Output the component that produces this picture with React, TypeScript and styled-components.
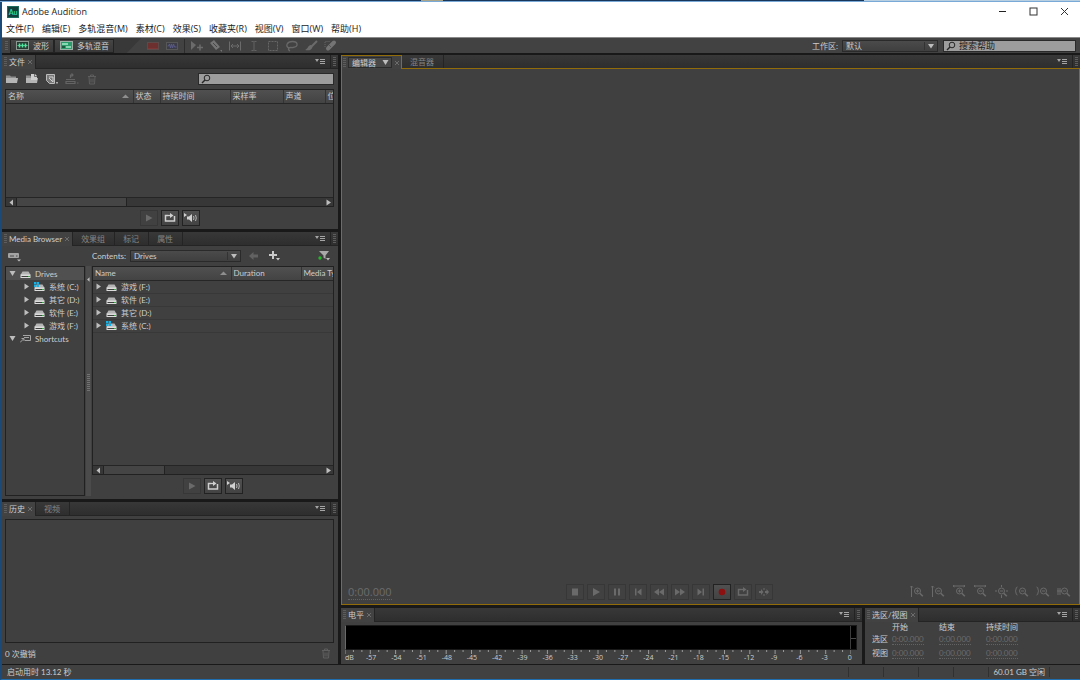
import React from "react";
import styled, { createGlobalStyle, css } from "styled-components";

const GlobalStyle = createGlobalStyle`
  *, *::before, *::after { box-sizing: border-box; }
  body {
    margin: 0;
    background: #191919;
    color: #cdcdcd;
    font: 400 8px/12px Lato, "Noto Sans CJK SC", sans-serif;
  }
  button, input, select {
    margin: 0;
    padding: 0;
    border: 0;
    background: none;
    color: inherit;
    font: inherit;
  }
  svg { display: block; flex: none; }
  table { border-collapse: collapse; border-spacing: 0; }
  th, td { padding: 0; text-align: left; font-weight: 400; }
`;

const amber = "#936c0a";

/* ---------- window ---------- */

const Window = styled.div`
  display: flex;
  flex-direction: column;
  min-height: 100vh;
  border-left: 2px solid #1c4a78;
  border-bottom: 1px solid #1f6fb0;
`;

const DesktopEdge = styled.div`
  height: 2px;
  margin-left: -2px;
  border-bottom: 1px solid #79a9d6;
  background: linear-gradient(90deg, #17365a 0 39%, #a8a58a 39% 41%, #17365a 41% 80%, #b8cfe2 80%);
`;

const TitleBar = styled.header`
  display: flex;
  align-items: center;
  gap: 3px;
  height: 19px;
  padding-left: 5px;
  background: #fff;
  color: #1b1b1b;
`;

const WindowTitle = styled.h1`
  flex: 1;
  margin: 0;
  font: 400 9px/12px "Open Sans", sans-serif;
`;

const CaptionButtons = styled.div`
  display: flex;
`;

const CaptionButton = styled.button`
  display: grid;
  place-items: center;
  width: 31px;
  height: 19px;
`;

const MenuBar = styled.nav`
  display: flex;
  align-items: center;
  gap: 8px;
  height: 16px;
  padding-left: 4px;
  background: #fff;
`;

const MenuItem = styled.button`
  color: #1b1b1b;
  font: 400 9px/12px "Open Sans", "Noto Sans CJK SC", sans-serif;
  white-space: nowrap;
`;

/* ---------- toolbar ---------- */

const ToolBar = styled.div`
  display: flex;
  align-items: center;
  height: 16px;
  padding: 0 4px 0 3px;
  border-top: 1px solid #8a8a8a;
  background: #424242;
`;

const Grip = styled.span`
  flex: none;
  width: 3px;
  height: 10px;
  background: repeating-linear-gradient(#5d5d5d 0 1px, transparent 1px 2px);
`;

const ModeButton = styled.button`
  display: flex;
  align-items: center;
  gap: 4px;
  height: 14px;
  padding: 0 4px 0 5px;
  border: 1px solid #232323;
  background: linear-gradient(#454545, #383838);
  white-space: nowrap;
`;

const ModeGroup = styled.div`
  display: flex;
  margin-left: 2px;
`;

const ToolSlant = styled.span`
  width: 32px;
  height: 15px;
  background: #383838;
  clip-path: polygon(0 0, 85% 0, 40% 100%, 0 100%);
`;

const ToolGroup = styled.div`
  display: flex;
  align-items: center;
  gap: 5px;
`;

const Divider = styled.span`
  width: 1px;
  height: 14px;
  margin: 0 5px;
  background: #2c2c2c;
`;

const IconButton = styled.button<{ $w?: number }>`
  display: grid;
  place-items: center;
  flex: none;
  width: ${(p) => p.$w ?? 14}px;
  height: 14px;
`;

const Spacer = styled.span`
  flex: 1;
`;

const LabelledField = styled.div<{ $indent?: number }>`
  display: flex;
  align-items: center;
  gap: 4px;
  margin-left: ${(p) => p.$indent ?? 0}px;
  white-space: nowrap;
`;

const SelectBox = styled.div<{ $w: number }>`
  position: relative;
  width: ${(p) => p.$w}px;
  height: 12px;
  border: 1px solid #2a2a2a;
  background: linear-gradient(#4b4b4b, #3f3f3f);

  select {
    display: block;
    width: 100%;
    height: 10px;
    padding-left: 3px;
    appearance: none;
    line-height: 10px;
  }
  svg {
    position: absolute;
    top: 0;
    right: 0;
    pointer-events: none;
  }
`;

const SearchBox = styled.label<{ $w: number }>`
  display: flex;
  align-items: center;
  gap: 3px;
  width: ${(p) => p.$w}px;
  height: 12px;
  padding-left: 2px;
  border: 1px solid #2a2a2a;
  background: #9d9d9d;

  input {
    flex: 1;
    min-width: 0;
    height: 10px;
    color: #202020;
    font-size: 9px;
    line-height: 10px;
    outline: none;
  }
  input::placeholder { color: #202020; opacity: 1; }
`;

const HelpSearch = styled.div`
  margin-left: 5px;
`;

/* ---------- panels ---------- */

const Workspace = styled.main`
  display: flex;
  flex: 1;
  gap: 3px;
  padding-top: 2px;
  background: #191919;
`;

const Sidebar = styled.div`
  display: grid;
  grid-template-rows: 174fr 267fr 162fr;
  gap: 3px;
  flex: none;
  width: 336px;
`;

const MainColumn = styled.div`
  display: flex;
  flex: 1;
  flex-direction: column;
  gap: 3px;
  min-width: 0;
`;

const BottomRow = styled.div`
  display: flex;
  gap: 3px;
  min-height: 56px;
`;

const Panel = styled.section<{ $grow?: boolean; $w?: number }>`
  display: flex;
  flex-direction: column;
  min-width: 0;
  min-height: 0;
  background: #404040;
  ${(p) => p.$grow && css`flex: 1;`}
  ${(p) => p.$w && css`flex: none; width: ${p.$w}px;`}
`;

const TabStrip = styled.div<{ $focus?: boolean }>`
  display: flex;
  flex: none;
  height: 14px;
  background: linear-gradient(#383838, #2d2d2d);
  box-shadow: inset 0 -1px ${(p) => (p.$focus ? amber : "#242424")};
`;

const Tab = styled.button<{ $active?: boolean; $focus?: boolean }>`
  display: flex;
  align-items: center;
  gap: 2px;
  height: 13px;
  padding: 0 9px 0 8px;
  border-right: 1px solid #242424;
  color: #858585;
  white-space: nowrap;
  ${(p) => p.$active && css`
    height: 14px;
    padding: 0 2px;
    background: #424242;
    color: #cdcdcd;
  `}
  ${(p) => p.$focus && css`
    padding: 0 1px;
    border: solid ${amber};
    border-width: 1px 1px 0;
  `}
`;

const EditorPicker = styled.span`
  display: flex;
  align-items: center;
  gap: 6px;
  height: 11px;
  padding: 0 2px 0 3px;
  border: 1px solid #2b2b2b;
  background: #484848;
`;

const TabMenu = styled.button`
  display: grid;
  place-items: center;
  width: 20px;
  height: 13px;
  margin-left: auto;
`;

const TabEnd = styled.span`
  display: grid;
  place-items: center;
  width: 8px;
  height: 13px;
  border-left: 1px solid #232323;
`;

const PanelBody = styled.div`
  display: flex;
  flex: 1;
  flex-direction: column;
  min-height: 0;
  padding: 0 4px 0 3px;
`;

const PanelTools = styled.div`
  display: flex;
  align-items: center;
  gap: 6px;
  height: 20px;
`;

const Well = styled.div<{ $grow?: boolean; $w?: number }>`
  display: flex;
  flex-direction: column;
  min-width: 0;
  min-height: 0;
  border: 1px solid #212121;
  overflow: hidden;
  ${(p) => p.$grow && css`flex: 1;`}
  ${(p) => p.$w && css`flex: none; width: ${p.$w}px;`}
`;

const DataTable = styled.table`
  width: 100%;
  table-layout: fixed;

  thead tr { height: 13px; background: linear-gradient(#505050, #434343); }
  th {
    height: 13px;
    padding-left: 2px;
    border-right: 1px solid #333;
    border-bottom: 1px solid #262626;
    line-height: 12px;
    overflow: hidden;
    white-space: nowrap;
  }
  th:last-child { border-right: 0; }
  td { height: 13px; border-bottom: 1px solid #383838; overflow: hidden; }
`;

const HeadCell = styled.span`
  display: flex;
  align-items: center;
  justify-content: space-between;
  padding-right: 4px;
`;

const RowCell = styled.span`
  display: flex;
  align-items: center;
  gap: 4px;
  height: 12px;
  padding-left: 2px;
  white-space: nowrap;
`;

const ScrollBar = styled.div`
  display: flex;
  flex: none;
  height: 9px;
  margin-top: auto;
  border-top: 1px solid #252525;
  background: #373737;
`;

const ScrollArrow = styled.button`
  display: grid;
  place-items: center;
  width: 10px;
`;

const ScrollTrack = styled.div`
  flex: 1;
`;

const ScrollThumb = styled.div<{ $size: string }>`
  width: ${(p) => p.$size};
  height: 8px;
  border: solid #222;
  border-width: 0 1px;
  background: #454545;
`;

const PreviewBar = styled.div<{ $h: number }>`
  display: flex;
  flex: none;
  align-items: center;
  justify-content: center;
  gap: 3px;
  height: ${(p) => p.$h}px;
`;

const SquareButton = styled.button<{ $dim?: boolean }>`
  display: grid;
  place-items: center;
  width: 18px;
  height: 16px;
  border: 1px solid ${(p) => (p.$dim ? "#373737" : "#222")};
  background: ${(p) => (p.$dim ? "#414141" : "linear-gradient(#505050, #434343)")};
  color: ${(p) => (p.$dim ? "#6a6a6a" : "#d0d0d0")};
`;

const BrowserSplit = styled.div`
  display: flex;
  flex: 1;
  min-height: 0;
  padding-bottom: 3px;
`;

const BrowserList = styled.div`
  display: flex;
  flex: 1;
  flex-direction: column;
  min-width: 0;
`;

const TreeList = styled.ul`
  margin: 0;
  padding: 0;
  list-style: none;
`;

const TreeItem = styled.li<{ $depth: number; $selected?: boolean }>`
  display: flex;
  align-items: center;
  gap: 4px;
  height: 13px;
  padding-left: ${(p) => 3 + p.$depth * 14}px;
  background: ${(p) => (p.$selected ? "#505050" : "none")};
  white-space: nowrap;
`;

const Splitter = styled.div`
  display: flex;
  flex-direction: column;
  align-items: center;
  justify-content: space-between;
  width: 5px;
  margin: 0 1px;
  padding: 11px 0 105px;
  background: #4b4b4b;
`;

const SplitGrip = styled.span`
  width: 3px;
  height: 17px;
  background: repeating-linear-gradient(#727272 0 1px, transparent 1px 2px);
`;

const HistoryBody = styled(PanelBody)`
  padding-top: 3px;
`;

const PanelFooter = styled.footer`
  display: flex;
  flex: none;
  align-items: center;
  justify-content: space-between;
  height: 21px;
  padding-right: 3px;
`;

/* ---------- editor ---------- */

const EditorCanvas = styled.div`
  display: flex;
  flex: 1;
  flex-direction: column;
  justify-content: flex-end;
  border: solid ${amber};
  border-width: 0 1px 1px;
`;

const TransportRow = styled.div`
  display: flex;
  align-items: center;
  height: 25px;
  padding: 0 8px 0 6px;
`;

const TimeSlot = styled.div`
  flex: 1 1 218px;
`;

const TimeCode = styled.span<{ $large?: boolean }>`
  border-bottom: 1px dotted #626262;
  color: #6c6c6c;
  ${(p) => p.$large && css`font: 400 11px/13px "Open Sans", sans-serif;`}
`;

const TransportGroup = styled.div`
  display: flex;
  gap: 3px;
`;

const ZoomGroup = styled.div`
  display: flex;
  flex: 1 1 299px;
  justify-content: flex-end;
  gap: 7px;
`;

/* ---------- levels ---------- */

const LevelsBody = styled.div`
  flex: 1;
  padding: 3px 5px 0 4px;
`;

const Meter = styled.div`
  display: flex;
  justify-content: flex-end;
  height: 25px;
  border: 1px solid #191919;
  border-left: 1px solid #75750b;
  background: #000;
`;

const ClipLamp = styled.div`
  width: 6px;
  border-left: 1px solid #3c3c3c;
  background: linear-gradient(#000 0 12px, #4a4a4a 12px 13px, #000 13px);
`;

const Scale = styled.div`
  padding-right: 6px;
`;

const ScaleLabels = styled.div`
  display: flex;
  justify-content: space-between;
  height: 8px;
  font: 400 7px/8px "Open Sans", sans-serif;
`;

const ScaleLabel = styled.span`
  display: flex;
  justify-content: center;
  width: 2px;
  white-space: nowrap;

  &:first-child { justify-content: flex-start; }
`;

/* ---------- selection / view ---------- */

const RangeTable = styled.table`
  width: 161px;
  margin: 0 0 0 7px;
  table-layout: fixed;

  th, td { height: 14px; line-height: 10px; white-space: nowrap; }
  thead th, thead td { height: 10px; }
  th:first-child, td:first-child { width: 20px; }
`;

const StatusBar = styled.footer`
  display: flex;
  align-items: center;
  justify-content: space-between;
  height: 15px;
  padding-left: 5px;
  border-top: 1px solid #191919;
  background: #414141;
`;

const StatusCells = styled.div`
  display: flex;
  padding-right: 30px;
`;

const StatusCell = styled.span`
  min-width: 35px;
  height: 10px;
  padding: 0 4px;
  border-left: 1px solid #303030;
  line-height: 10px;

  &:last-child { border-right: 1px solid #303030; }
`;

/* ---------- drawings ---------- */

type Dir = "up" | "down" | "left" | "right";
const trianglePaths: Record<Dir, string> = {
  up: "M0 5 3.5 1.500 7 5z",
  down: "M.5 1h6L3.500 6z",
  left: "M5 .5v6L1.500 3.500z",
  right: "M1.500 .5v6L6 3.500z",
};
const Triangle = ({ dir, size = 7, color = "#bdbdbd" }: { dir: Dir; size?: number; color?: string }) => (
  <svg width={size} height={size} viewBox="0 0 7 7" fill={color}><path d={trianglePaths[dir]} /></svg>
);

const AppLogo = () => (
  <svg width="12" height="12" viewBox="0 0 12 12">
    <rect width="12" height="12" fill="#123f3a" />
    <rect x=".5" y=".5" width="11" height="11" fill="none" stroke="#1f6b5e" />
    <text x="6" y="8.500" textAnchor="middle" fontSize="7" fontWeight="700" fill="#35d6a6">Au</text>
  </svg>
);

const Magnifier = ({ color = "#262626" }: { color?: string }) => (
  <svg width="10" height="10" viewBox="0 0 10 10" fill="none" stroke={color}>
    <circle cx="6" cy="4" r="2.800" /><path d="M4 6 1 9" strokeWidth="1.500" />
  </svg>
);

const PanelMenuIcon = () => (
  <svg width="11" height="7" viewBox="0 0 11 7" fill="#a5a5a5">
    <path d="M0 1h4L2 4zM5 1h5v1H5zM5 3h5v1H5zM5 5h5v1H5z" />
  </svg>
);

const CloseIcon = () => (
  <svg width="6" height="6" viewBox="0 0 6 6" stroke="#777" strokeWidth=".8"><path d="m1 1 4 4M5 1 1 5" /></svg>
);

const WaveformIcon = () => (
  <svg width="13" height="9" viewBox="0 0 13 9">
    <rect x=".5" y=".5" width="12" height="8" fill="#263a32" stroke="#8d9a94" />
    <path d="M1.500 4.500h10" stroke="#43c98a" /><path d="M3.500 2.500v4M6.500 2.500v4M9.500 2.500v4" stroke="#55e6a0" strokeWidth="1.600" />
  </svg>
);

const MultitrackIcon = () => (
  <svg width="13" height="9" viewBox="0 0 13 9">
    <rect x=".5" y=".5" width="12" height="8" fill="#2b9c6c" stroke="#9fb0a8" />
    <path d="M2 3h6M6 6h5" stroke="#a5ecca" strokeWidth="1.500" /><path d="M2 6h3" stroke="#1b4433" strokeWidth="1.500" />
  </svg>
);

const toolIcons: Record<string, React.ReactNode> = {
  光谱频率: <><rect x="1.500" y="3.500" width="11" height="7" fill="#6e2f2f" stroke="#5c4a4a" /><path d="M2 9.500h10" stroke="#7d3636" /></>,
  光谱音高: <><rect x="1.500" y="3.500" width="11" height="7" fill="#3c3c48" stroke="#575757" /><path d="M2.500 7h1l1-2 1 4 1-4 1 4 1-4 1 3h2" stroke="#5b5b88" /></>,
  移动: <><path d="M1 2v9l5-5z" fill="#6b6b6b" /><path d="M7 8.500h6M10 5.500v6" stroke="#6b6b6b" strokeWidth="1.500" /></>,
  切割: <><path d="m1 4 4-3 6 7-4 3z" fill="#747474" /><path d="m4 4 4 4" stroke="#484848" /><path d="M11 11h2v2z" fill="#747474" /></>,
  滑动: <path d="M1.500 2.500v9M12.500 2.500v9M3 7h8M5 5 3 7l2 2M9 5l2 2-2 2" stroke="#6b6b6b" />,
  时间选区: <path d="M4.500 2.500h2l.5.5.5-.5h2M7 3v8M4.500 11.500h2l.5-.5.5.5h2" stroke="#636363" />,
  框选: <rect x="2.500" y="2.500" width="9" height="9" stroke="#666" strokeDasharray="2 1" />,
  套索: <path d="M4 9C0 7 2 2.500 7.500 2.500S14 7.500 8 8.500c-2 .3-3-.5-4 .5-1 1-.5 2 1 3" stroke="#686868" strokeWidth="1.300" />,
  画笔: <><path d="M13 2 7 8" stroke="#6b6b6b" strokeWidth="2" /><path d="M7 6c-3 0-3 4-6 5 4 1 7 0 7.500-3.500z" fill="#6b6b6b" /></>,
  污点修复: <><path d="m11 3.500-6 6" stroke="#747474" strokeWidth="4" strokeLinecap="round" /><path d="m6 6 2 2" stroke="#555" /><path d="M2 8V2.500h5" stroke="#666" strokeDasharray="1 1" /></>,
};
const ToolIcon = ({ name }: { name: string }) => (
  <svg width="14" height="14" viewBox="0 0 14 14" fill="none">{toolIcons[name]}</svg>
);

const FolderIcon = ({ extra }: { extra?: boolean }) => (
  <svg width="14" height="12" viewBox="0 0 14 12" fill="#b5b5b5">
    <path d="M1 2.500h4l1 1h5v2H1z" fill="#8d8d8d" />
    <path d="M1 10V5h12l-1 5z" />
    {extra && <path d="M6 1h4l2 2v4H6z" fill="#cfcfcf" />}
    {extra && <path d="M9.500 1v2.500H12" fill="none" stroke="#555" strokeWidth=".8" />}
  </svg>
);

const NewFileIcon = () => (
  <svg width="14" height="12" viewBox="0 0 14 12">
    <path d="M1.500 1.500h8v9h-5l-3-3z" fill="#777" stroke="#bdbdbd" />
    <path d="M4 4h4v5M8 9 4 5" fill="none" stroke="#d2d2d2" /><path d="M11 9h2v1.500h-2z" fill="#aaa" />
  </svg>
);

const InsertIcon = () => (
  <svg width="14" height="12" viewBox="0 0 14 12" fill="none" stroke="#646464">
    <path d="M1 8.500h9v2H1zM1 6.500h9M5.500 5V2H8M6.500 .5 8 2 6.500 3.500" strokeWidth="1.200" /><path d="M12 10h1.500" />
  </svg>
);

const TrashIcon = () => (
  <svg width="10" height="11" viewBox="0 0 10 11" fill="none" stroke="#5e5e5e">
    <path d="M1 2.500h8M3.500 2V1h3v1M2 3l.5 7h5L8 3M4 4.500v4M6 4.500v4" />
  </svg>
);

const PlayGlyph = () => <svg width="8" height="8" viewBox="0 0 8 8" fill="currentColor"><path d="M1 .5 7.500 4 1 7.500z" /></svg>;
const LoopGlyph = () => (
  <svg width="12" height="10" viewBox="0 0 12 10">
    <path d="M4 2.500H1.500v5.500h9V3" fill="none" stroke="currentColor" strokeWidth="1.500" /><path d="M4 2.500h3" stroke="currentColor" strokeWidth="1.300" /><path d="M6 0v5l3.500-2.500z" fill="currentColor" />
  </svg>
);
const SpeakerGlyph = () => (
  <svg width="14" height="10" viewBox="0 0 14 10" fill="currentColor">
    <path d="M0 0v4l3-2zM3 3.500h2L8 1v8L5 6.500H3z" /><path d="M9.500 3q1 2 0 4M11.500 2q1.600 3 0 6" fill="none" stroke="currentColor" strokeWidth=".8" />
  </svg>
);

const DriveIcon = ({ system }: { system?: boolean }) => (
  <svg width="11" height="10" viewBox="0 0 11 10">
    <path d="M2.500 2.500h6L10.500 6h-10z" fill="#b4b4b4" /><path d="M.5 5.500h10V9H.5z" fill="#dcdcdc" />
    <path d="M1.500 7.500h8" stroke="#3f3f3f" /><path d="M8 7.500h1.500" stroke="#3fae4b" />
    {system && <path d="M0 0h2.300v2.300H0zM2.800 0H5v2.300H2.800zM0 2.800h2.300V5H0zM2.800 2.800H5V5H2.800z" fill="#12b3e8" />}
  </svg>
);

const ShortcutIcon = () => (
  <svg width="11" height="10" viewBox="0 0 11 10" fill="none" stroke="#a5a5a5">
    <path d="M3 1.500h7.500v5H5M4 3.500h5" /><path d="M0 8.500 3.500 5M1.500 4.500H4V7" />
  </svg>
);

const DriveMenuIcon = () => (
  <svg width="13" height="11" viewBox="0 0 13 11">
    <rect x="0" y="2" width="11" height="5" rx="1" fill="#a3a3a3" /><path d="M2 5h4M8 5h1.500" stroke="#4a4a4a" /><path d="M9 8.500h4l-2 2z" fill="#bbb" />
  </svg>
);

const BackIcon = () => <svg width="10" height="8" viewBox="0 0 10 8" fill="#626262"><path d="M0 4 4.500 0v2.500H9v3H4.500V8z" /></svg>;
const PlusIcon = () => (
  <svg width="11" height="10" viewBox="0 0 11 10" fill="#cacaca"><path d="M3 0h2v3h3v2H5v3H3V5H0V3h3zM7 7h4L9 9.500z" /></svg>
);
const FilterIcon = () => (
  <svg width="12" height="10" viewBox="0 0 12 10"><path d="M1 0h10L7.500 4.500V8l-2-1.500v-2z" fill="#a9a9a9" /><circle cx="2" cy="7" r="1.700" fill="#25b52a" /><path d="M8 7h4l-2 2.500z" fill="#bbb" /></svg>
);

const transportShapes: [string, React.ReactNode][] = [
  ["停止", <path d="M2 1.500h6v7H2z" />],
  ["播放", <path d="M2 1v8l7-4z" />],
  ["暂停", <path d="M2 1.500h2v7H2zM6 1.500h2v7H6z" />],
  ["转到开始", <path d="M2 1.500h1.500v7H2zM8.500 1.500v7L4 5z" />],
  ["快退", <path d="M5 1.500v7L0 5zM10 1.500v7L5 5z" />],
  ["快进", <path d="M0 1.500v7L5 5zM5 1.500v7l5-3.500z" />],
  ["转到结尾", <path d="M6.500 1.500H8v7H6.500zM1.500 1.500v7L6 5z" />],
  ["录制", <circle cx="5" cy="5" r="3.300" fill="#8c1010" />],
  ["循环", null],
  ["跳过选区", <><path d="M0 4h2V2l2.500 3L2 8V6H0zM6 4h1.500V2L10 5 7.500 8V6H6z" /><path d="M5 1v2M5 7v2" stroke="currentColor" /></>],
];

const Lens = ({ minus }: { minus?: boolean }) => (
  <g fill="none"><circle cx="7.500" cy="6" r="3" /><path d="m9.800 8.300 3 3" strokeWidth="1.600" /><path d={minus ? "M6 6h3" : "M6 6h3M7.500 4.500v3"} /></g>
);
const zoomShapes: [string, boolean, string][] = [
  ["放大振幅", false, "M1.500 1v11M0 2.500 1.500 1 3 2.500"],
  ["缩小振幅", true, "M1.500 1v11M0 2.500 1.500 1 3 2.500"],
  ["放大时间", false, "M1 1h12M2.500 0 1 1l1.500 1M11.500 0 13 1l-1.500 1"],
  ["缩小时间", true, "M1 1h12M2.500 0 1 1l1.500 1M11.500 0 13 1l-1.500 1"],
  ["全部缩小", true, "M7.500 0v2M7.500 10v3M1 6h2M12 6h2"],
  ["放大入点", true, "M2.500 2Q1 2 1 4t-1 2q1 0 1 2t1.500 2"],
  ["放大出点", true, "M.5 2Q2 2 2 4t1 2q-1 0-1 2T.5 10"],
  ["缩放至选区", true, "M1 3v7M3 3v7M0 6h4"],
];

/* ---------- composed parts ---------- */

const StripEnd = () => (
  <>
    <TabMenu aria-label="面板菜单"><PanelMenuIcon /></TabMenu>
    <TabEnd><Grip /></TabEnd>
  </>
);

const Tabs = ({ tabs }: { tabs: string[] }) => (
  <TabStrip role="tablist">
    {tabs.map((name, i) => (
      <Tab key={name} role="tab" aria-selected={i === 0} $active={i === 0}>
        {i === 0 && <Grip />}
        {name}
        {i === 0 && <CloseIcon />}
      </Tab>
    ))}
    <StripEnd />
  </TabStrip>
);

const HorizontalScroll = ({ size }: { size: string }) => (
  <ScrollBar>
    <ScrollArrow aria-label="向左滚动"><Triangle dir="left" /></ScrollArrow>
    <ScrollTrack><ScrollThumb $size={size} /></ScrollTrack>
    <ScrollArrow aria-label="向右滚动"><Triangle dir="right" /></ScrollArrow>
  </ScrollBar>
);

const Preview = ({ height }: { height: number }) => (
  <PreviewBar $h={height}>
    <SquareButton $dim aria-label="播放"><PlayGlyph /></SquareButton>
    <SquareButton aria-label="循环播放"><LoopGlyph /></SquareButton>
    <SquareButton aria-label="自动播放"><SpeakerGlyph /></SquareButton>
  </PreviewBar>
);

const Dropdown = ({ id, value, width }: { id: string; value: string; width: number }) => (
  <SelectBox $w={width}>
    <select id={id} defaultValue={value}><option>{value}</option></select>
    <svg width="13" height="10" viewBox="0 0 13 10"><path d="M.5 1v8" stroke="#333" /><path d="M4 3h6L7 7.500z" fill="#bdbdbd" /></svg>
  </SelectBox>
);

const menus = ["文件(F)", "编辑(E)", "多轨混音(M)", "素材(C)", "效果(S)", "收藏夹(R)", "视图(V)", "窗口(W)", "帮助(H)"];
const tools = Object.keys(toolIcons);
const treeDrives = ["系统 (C:)", "其它 (D:)", "软件 (E:)", "游戏 (F:)"];
const listDrives = ["游戏 (F:)", "软件 (E:)", "其它 (D:)", "系统 (C:)"];
const levelMarks = Array.from({ length: 21 }, (_, i) => (i === 0 ? "dB" : String(i * 3 - 60)));

const FilePanel = () => (
  <Panel>
    <Tabs tabs={["文件"]} />
    <PanelBody>
      <PanelTools>
        <IconButton aria-label="打开文件"><FolderIcon /></IconButton>
        <IconButton aria-label="导入文件"><FolderIcon extra /></IconButton>
        <IconButton aria-label="新建文件"><NewFileIcon /></IconButton>
        <IconButton aria-label="插入到多轨"><InsertIcon /></IconButton>
        <IconButton aria-label="删除"><TrashIcon /></IconButton>
        <Spacer />
        <SearchBox $w={136}><Magnifier /><input aria-label="搜索文件" /></SearchBox>
      </PanelTools>
      <Well $grow>
        <DataTable>
          <colgroup><col width="127" /><col width="27" /><col width="70" /><col width="53" /><col width="42" /><col /></colgroup>
          <thead>
            <tr>
              <th><HeadCell>名称<Triangle dir="up" color="#8f8f8f" /></HeadCell></th>
              <th>状态</th><th>持续时间</th><th>采样率</th><th>声道</th><th>位</th>
            </tr>
          </thead>
        </DataTable>
        <HorizontalScroll size="36%" />
      </Well>
      <Preview height={22} />
    </PanelBody>
  </Panel>
);

const MediaBrowser = () => (
  <Panel>
    <Tabs tabs={["Media Browser", "效果组", "标记", "属性"]} />
    <PanelBody>
      <PanelTools>
        <IconButton aria-label="驱动器" $w={19}><DriveMenuIcon /></IconButton>
        <LabelledField $indent={62}>
          <label htmlFor="contents">Contents:</label>
          <Dropdown id="contents" value="Drives" width={111} />
        </LabelledField>
        <IconButton aria-label="后退"><BackIcon /></IconButton>
        <IconButton aria-label="添加快捷方式"><PlusIcon /></IconButton>
        <Spacer />
        <IconButton aria-label="筛选" $w={20}><FilterIcon /></IconButton>
      </PanelTools>
      <BrowserSplit>
        <Well $w={80}>
          <TreeList>
            <TreeItem $depth={0} $selected><Triangle dir="down" /><DriveIcon />Drives</TreeItem>
            {treeDrives.map((d) => (
              <TreeItem key={d} $depth={1}><Triangle dir="right" /><DriveIcon system={d.includes("C:")} />{d}</TreeItem>
            ))}
            <TreeItem $depth={0}><Triangle dir="down" /><ShortcutIcon />Shortcuts</TreeItem>
          </TreeList>
        </Well>
        <Splitter><Triangle dir="left" size={5} /><SplitGrip /></Splitter>
        <BrowserList>
          <Well $grow>
            <DataTable>
              <colgroup><col width="138" /><col width="70" /><col /></colgroup>
              <thead>
                <tr>
                  <th><HeadCell>Name<Triangle dir="up" color="#8f8f8f" /></HeadCell></th>
                  <th>Duration</th><th>Media Type</th>
                </tr>
              </thead>
              <tbody>
                {listDrives.map((d) => (
                  <tr key={d}>
                    <td colSpan={3}>
                      <RowCell><Triangle dir="right" /><DriveIcon system={d.includes("C:")} />{d}</RowCell>
                    </td>
                  </tr>
                ))}
              </tbody>
            </DataTable>
            <HorizontalScroll size="28%" />
          </Well>
          <Preview height={21} />
        </BrowserList>
      </BrowserSplit>
    </PanelBody>
  </Panel>
);

const HistoryPanel = () => (
  <Panel>
    <Tabs tabs={["历史", "视频"]} />
    <HistoryBody>
      <Well $grow />
      <PanelFooter>
        <span>0 次撤销</span>
        <IconButton aria-label="清空历史" $w={10}><TrashIcon /></IconButton>
      </PanelFooter>
    </HistoryBody>
  </Panel>
);

const EditorPanel = () => (
  <Panel $grow>
    <TabStrip role="tablist" $focus>
      <Tab role="tab" aria-selected $active $focus>
        <Grip />
        <EditorPicker>编辑器<Triangle dir="down" /></EditorPicker>
        <CloseIcon />
      </Tab>
      <Tab role="tab" aria-selected={false}>混音器</Tab>
      <StripEnd />
    </TabStrip>
    <EditorCanvas>
      <TransportRow>
        <TimeSlot><TimeCode $large>0:00.000</TimeCode></TimeSlot>
        <TransportGroup>
          {transportShapes.map(([name, shape]) => (
            <SquareButton key={name} aria-label={name} $dim={name !== "录制"}>
              {shape ? <svg width="10" height="10" viewBox="0 0 10 10" fill="currentColor">{shape}</svg> : <LoopGlyph />}
            </SquareButton>
          ))}
        </TransportGroup>
        <ZoomGroup>
          {zoomShapes.map(([name, minus, d]) => (
            <IconButton key={name} aria-label={name}>
              <svg width="14" height="13" viewBox="0 0 14 13" fill="none" stroke="#6a6a6a"><path d={d} /><Lens minus={minus} /></svg>
            </IconButton>
          ))}
        </ZoomGroup>
      </TransportRow>
    </EditorCanvas>
  </Panel>
);

const LevelsPanel = () => (
  <Panel $grow>
    <Tabs tabs={["电平"]} />
    <LevelsBody>
      <Meter><ClipLamp /></Meter>
      <Scale>
        <svg width="100%" height="4">
          {Array.from({ length: 61 }, (_, i) => (
            <line key={i} x1={`${(i / 60) * 100}%`} x2={`${(i / 60) * 100}%`} y1="0" y2={i % 3 ? 2 : 4} stroke="#9a9a9a" />
          ))}
        </svg>
        <ScaleLabels>{levelMarks.map((m) => <ScaleLabel key={m}>{m}</ScaleLabel>)}</ScaleLabels>
      </Scale>
    </LevelsBody>
  </Panel>
);

const SelectionPanel = () => (
  <Panel $w={215}>
    <Tabs tabs={["选区/视图"]} />
    <RangeTable>
      <thead><tr><td /><th>开始</th><th>结束</th><th>持续时间</th></tr></thead>
      <tbody>
        {["选区", "视图"].map((row) => (
          <tr key={row}>
            <th>{row}</th>
            {[0, 1, 2].map((i) => <td key={i}><TimeCode>0:00.000</TimeCode></td>)}
          </tr>
        ))}
      </tbody>
    </RangeTable>
  </Panel>
);

export default function App() {
  return (
    <Window>
      <GlobalStyle />
      <DesktopEdge />
      <TitleBar>
        <AppLogo />
        <WindowTitle>Adobe Audition</WindowTitle>
        <CaptionButtons>
          <CaptionButton aria-label="最小化"><svg width="9" height="9" viewBox="0 0 9 9" stroke="#222"><path d="M1 4.500h7" /></svg></CaptionButton>
          <CaptionButton aria-label="最大化"><svg width="9" height="9" viewBox="0 0 9 9" fill="none" stroke="#333"><rect x="1" y="1" width="7" height="7" /></svg></CaptionButton>
          <CaptionButton aria-label="关闭"><svg width="9" height="9" viewBox="0 0 9 9" stroke="#333"><path d="m1 1 7 7M8 1 1 8" /></svg></CaptionButton>
        </CaptionButtons>
      </TitleBar>
      <MenuBar>{menus.map((m) => <MenuItem key={m}>{m}</MenuItem>)}</MenuBar>
      <ToolBar>
        <Grip />
        <ModeGroup>
          <ModeButton><WaveformIcon />波形</ModeButton>
          <ModeButton><MultitrackIcon />多轨混音</ModeButton>
        </ModeGroup>
        <ToolSlant />
        <ToolGroup>{tools.slice(0, 2).map((t) => <IconButton key={t} aria-label={t}><ToolIcon name={t} /></IconButton>)}</ToolGroup>
        <Divider />
        <ToolGroup>{tools.slice(2).map((t) => <IconButton key={t} aria-label={t}><ToolIcon name={t} /></IconButton>)}</ToolGroup>
        <Spacer />
        <LabelledField>
          <label htmlFor="workspace">工作区:</label>
          <Dropdown id="workspace" value="默认" width={96} />
        </LabelledField>
        <HelpSearch>
          <SearchBox $w={133}><Magnifier /><input aria-label="搜索帮助" placeholder="搜索帮助" /></SearchBox>
        </HelpSearch>
      </ToolBar>
      <Workspace>
        <Sidebar>
          <FilePanel />
          <MediaBrowser />
          <HistoryPanel />
        </Sidebar>
        <MainColumn>
          <EditorPanel />
          <BottomRow>
            <LevelsPanel />
            <SelectionPanel />
          </BottomRow>
        </MainColumn>
      </Workspace>
      <StatusBar>
        <span>启动用时 13.12 秒</span>
        <StatusCells>
          <StatusCell /><StatusCell /><StatusCell /><StatusCell />
          <StatusCell>60.01 GB 空闲</StatusCell>
        </StatusCells>
      </StatusBar>
    </Window>
  );
}
